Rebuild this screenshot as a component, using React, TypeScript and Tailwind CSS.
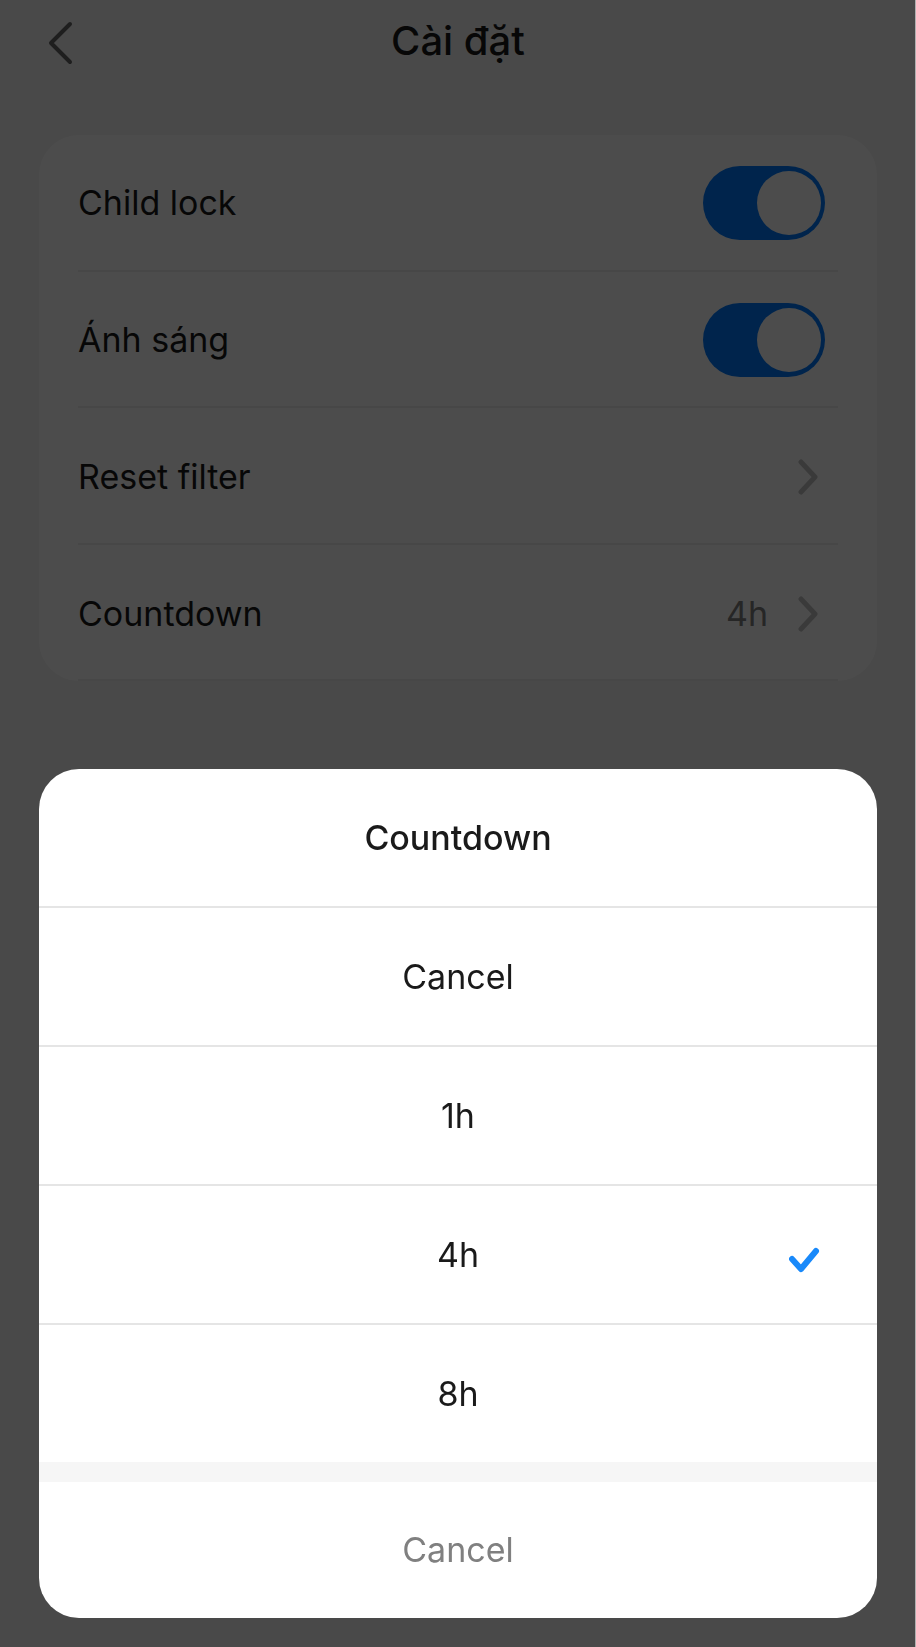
import { useState } from 'react';

const OPTIONS = ['Cancel', '1h', '4h', '8h'];

function ArrowIcon() {
    return (
        <svg viewBox="0 0 20 36" className="h-9 w-5" fill="none" stroke="#c4c4c4" strokeWidth="5" strokeLinecap="round" strokeLinejoin="round" aria-hidden="true">
            <path d="M3 3 L17 18 L3 33" />
        </svg>
    );
}

function ToggleRow({ id, label }: { id: string; label: string }) {
    const [on, setOn] = useState(true);

    return (
        <li className="flex items-center justify-between border-b-2 border-[#ededed] pt-0.5 pr-[13px]">
            <label htmlFor={id}>{label}</label>
            <input
                id={id}
                type="checkbox"
                role="switch"
                checked={on}
                onChange={(e) => setOn(e.target.checked)}
                className="flex h-[74px] w-[122px] appearance-none items-center rounded-full bg-gray-300 px-1 before:size-16 before:rounded-full before:bg-white checked:justify-end checked:bg-[#007aff]"
            />
        </li>
    );
}

function LinkRow({ label, value }: { label: string; value?: string }) {
    return (
        <li className="flex border-b-2 border-[#ededed] pt-1">
            <button type="button" className="flex flex-1 items-center pr-5 text-left">
                <span className="flex-1">{label}</span>
                {value && <span className="mr-[30px] text-[#808080]">{value}</span>}
                <ArrowIcon />
            </button>
        </li>
    );
}

export default function App() {
    const [selected, setSelected] = useState('4h');

    return (
        <div className="min-h-screen bg-[#f5f5f5] font-['Inter','Liberation_Sans',sans-serif] text-[34px] leading-10 text-[#1a1a1a]">
            <header className="grid h-[82px] grid-cols-[1fr_auto_1fr] items-center px-12">
                <button type="button" aria-label="Back" className="pt-1">
                    <svg viewBox="0 0 26 44" className="h-11 w-[26px]" fill="none" stroke="#666666" strokeWidth="4" strokeLinecap="round" strokeLinejoin="round" aria-hidden="true">
                        <path d="M22 3 L3 22 L22 41" />
                    </svg>
                </button>
                <h1 className="text-[40px] font-medium">Cài đặt</h1>
            </header>

            <main className="px-[39px] pt-[53px]">
                <ul className="grid min-h-[546px] auto-rows-fr rounded-[40px] bg-white px-[39px]">
                    <ToggleRow id="child-lock" label="Child lock" />
                    <ToggleRow id="light" label="Ánh sáng" />
                    <LinkRow label="Reset filter" />
                    <LinkRow label="Countdown" value={selected} />
                </ul>
            </main>

            {/* Countdown picker */}
            <div className="fixed inset-0 flex items-end border-r border-[#b0b0b0] bg-black/70 pr-[38px] pb-[29px] pl-[39px]">
                <div role="dialog" aria-modal="true" aria-labelledby="sheet-title" className="w-full overflow-hidden rounded-[40px] bg-white">
                    <h2 id="sheet-title" className="flex h-[139px] items-center justify-center border-b-2 border-[#e5e5e5] font-medium">
                        Countdown
                    </h2>
                    <ul className="divide-y-2 divide-[#e5e5e5]">
                        {OPTIONS.map((option) => (
                            <li key={option}>
                                <button
                                    type="button"
                                    onClick={() => setSelected(option)}
                                    className="grid h-[137px] w-full grid-cols-[1fr_auto_1fr] items-center px-14"
                                >
                                    <span className="col-start-2">{option}</span>
                                    {selected === option && (
                                        <svg viewBox="0 0 32 28" className="mt-2 h-7 w-8 justify-self-end" fill="none" stroke="#1989fa" strokeWidth="6" strokeLinecap="round" strokeLinejoin="round" aria-hidden="true">
                                            <path d="M3 14 L12 24 L27 6" />
                                        </svg>
                                    )}
                                </button>
                            </li>
                        ))}
                    </ul>
                    <button type="button" className="h-[156px] w-full border-t-20 border-[#f6f6f6] text-[#808080]">
                        Cancel
                    </button>
                </div>
            </div>
        </div>
    );
}
